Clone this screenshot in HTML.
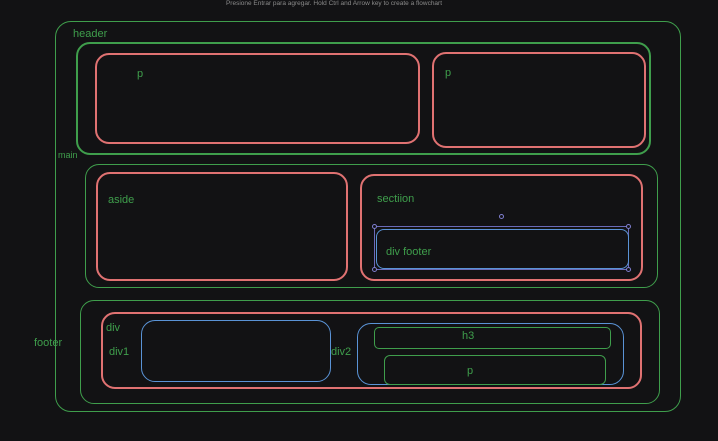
<!DOCTYPE html>
<html><head><meta charset="utf-8"><style>
html,body{margin:0;padding:0;}
body{width:718px;height:441px;background:#121214;position:relative;overflow:hidden;font-family:"Liberation Sans",sans-serif;}
.b{position:absolute;box-sizing:border-box;border-radius:14px;}
.g{border:1.5px solid #3f9e4c;}
.g2{border:2px solid #3f9e4c;}
.r{border:2px solid #e07272;}
.u{border:1.5px solid #5a93d6;}
.t{position:absolute;color:#3f9e4c;font-size:11px;line-height:1;white-space:nowrap;font-family:"Liberation Sans",sans-serif;}
.h{position:absolute;width:5px;height:5px;border:1px solid #7f7fd0;border-radius:50%;box-sizing:border-box;background:#121214;}
</style></head><body>
<div style="position:absolute;left:0;width:668px;top:0;text-align:center;font-size:6.5px;color:#8a8a8a;line-height:7px;">Presione Entrar para agregar. Hold Ctrl and Arrow key to create a flowchart</div>

<div class="b g" style="left:55px;top:21px;width:626px;height:391px;border-radius:16px;"></div>
<div class="t" style="left:73px;top:29px;">header</div>
<div class="b g2" style="left:76px;top:42px;width:575px;height:113px;"></div>
<div class="b r" style="left:95px;top:53px;width:325px;height:91px;"></div>
<div class="t" style="left:137px;top:69px;">p</div>
<div class="b r" style="left:432px;top:52px;width:214px;height:96px;"></div>
<div class="t" style="left:445px;top:68px;">p</div>

<div class="t" style="left:58px;top:151px;font-size:9px;">main</div>
<div class="b g" style="left:85px;top:164px;width:573px;height:124px;"></div>
<div class="b r" style="left:96px;top:172px;width:252px;height:109px;"></div>
<div class="t" style="left:108px;top:195px;">aside</div>
<div class="b r" style="left:360px;top:174px;width:283px;height:107px;"></div>
<div class="t" style="left:377px;top:194px;">sectiion</div>
<div style="position:absolute;left:374px;top:226px;width:255px;height:44px;border:1px solid #6a6ab8;box-sizing:border-box;"></div>
<div class="b u" style="left:376px;top:229px;width:253px;height:40px;border-radius:8px;"></div>
<div class="t" style="left:386px;top:247px;">div footer</div>
<div class="h" style="left:372px;top:224px;"></div>
<div class="h" style="left:626px;top:224px;"></div>
<div class="h" style="left:372px;top:267px;"></div>
<div class="h" style="left:626px;top:267px;"></div>
<div class="h" style="left:499px;top:214px;"></div>

<div class="t" style="left:34px;top:338px;">footer</div>
<div class="b g" style="left:80px;top:300px;width:580px;height:104px;"></div>
<div class="b r" style="left:101px;top:312px;width:541px;height:77px;"></div>
<div class="t" style="left:106px;top:323px;">div</div>
<div class="t" style="left:109px;top:347px;">div1</div>
<div class="b u" style="left:141px;top:320px;width:190px;height:62px;"></div>
<div class="t" style="left:331px;top:347px;">div2</div>
<div class="b u" style="left:357px;top:323px;width:267px;height:62px;"></div>
<div class="b g" style="left:374px;top:327px;width:237px;height:22px;border-radius:5px;"></div>
<div class="t" style="left:462px;top:331px;">h3</div>
<div class="b g" style="left:384px;top:355px;width:222px;height:30px;border-radius:6px;"></div>
<div class="t" style="left:467px;top:366px;">p</div>
</body></html>
